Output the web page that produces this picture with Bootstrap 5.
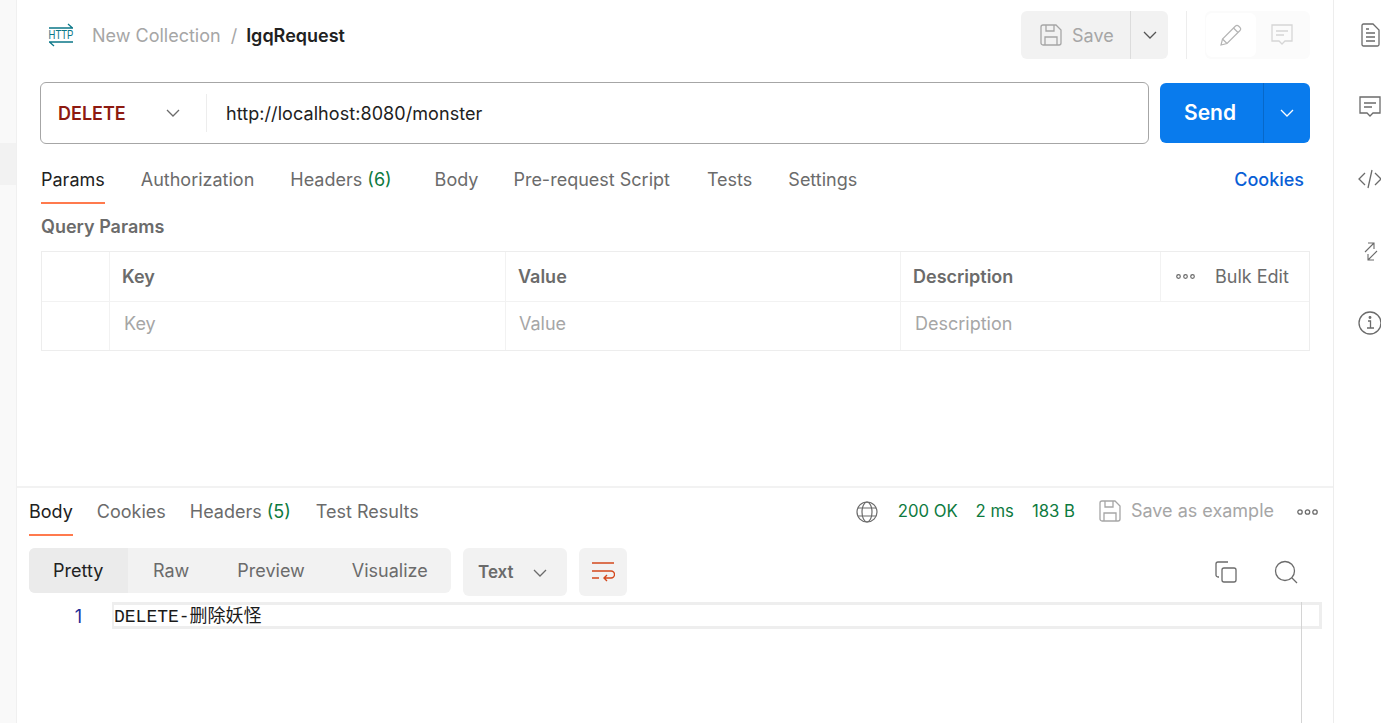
<!DOCTYPE html>
<html lang="en">
<head>
<meta charset="utf-8">
<title>IgqRequest</title>
<link href="https://cdn.jsdelivr.net/npm/bootstrap@5.3.0/dist/css/bootstrap.min.css" rel="stylesheet">
<style>
html,body{height:723px;overflow:hidden;background:#fff}
body{font-family:Inter,"Liberation Sans",sans-serif;font-size:18px;color:#212121}
svg{display:block;flex:none}
.pm-app{height:723px;width:1381px}
.pm-left{width:17px;flex:none;background:#f9f9f9;border-right:1px solid #f0f0f0;padding-top:143px}
.pm-left-sel{height:42px;background:#f2f2f2}
.pm-main{width:1316px;flex:none}
.pm-right{width:48px;flex:none;border-left:1px solid #ededed;overflow:hidden}
.pm-slots{width:72px;margin-top:-1px}
.pm-slot{height:72px}
.pm-req{padding:0 23px;height:488px;border-bottom:2px solid #f2f2f2}
.pm-head{height:82px;padding-bottom:12px}
.pm-http{width:26px;margin:0 18px 0 8px;flex:none}
.pm-http-t{font-family:"Liberation Sans",sans-serif;font-size:9.500px;line-height:12px;height:12px;text-align:center;color:#0b7788;transform:scaleY(1.25);white-space:nowrap}
.pm-crumb{color:#a6a6a6}
.pm-sep{color:#a6a6a6;margin:0 9px 0 10px}
.pm-name{color:#212121;font-weight:600}
.pm-save{width:147px;height:48px;background:#f2f2f2;border-radius:6px;color:#a6a6a6}
.pm-save-a{width:110px;border-right:1px solid #dcdcdc;padding-left:19px;gap:10px}
.pm-save-b{flex:1}
.pm-vr{width:1px;height:48px;background:#ededed;margin:0 18px}
.pm-tools{width:105px;height:48px;background:#fbfbfb;border-radius:6px}
.pm-tool-on{width:50px;height:44px;background:#fff;border-radius:6px;margin:2px 0 2px 1px}
.pm-tool-off{flex:1;padding-right:2px}
.pm-url{width:1109px;height:62px;border:1px solid #a6a6a6;border-radius:6px}
.pm-method{width:166px;padding:0 26px 0 17px;height:38px;border-right:1px solid #ededed;color:#8e1a10;font-weight:600}
.pm-addr{padding-left:19px;color:#212121;letter-spacing:.07px}
.pm-send{width:150px;height:60px;margin-left:11px;background:#097bed;border-radius:6px;color:#fff;font-size:21px;font-weight:600}
.pm-send-a{width:104px;border-right:1px solid #0768c9;height:100%;padding-right:3px}
.pm-send-b{flex:1}
.pm-tabs{height:71px;gap:36px;margin-left:1px}
.pm-tab{color:#6b6b6b;position:relative;line-height:22px}
.pm-tab.pm-on{color:#212121}
.pm-tab.pm-on::after{content:"";position:absolute;left:0;right:0;height:2px;background:#ff7a4d;bottom:-13px}
.pm-num{color:#0d7a40}
.pm-gap-h{margin-right:7px}
.pm-gap-b{margin-right:-1px}
.pm-gap-p{margin-right:1px}
.pm-cookies{color:#0a5fd6;font-weight:500;margin-left:auto;margin-right:6px}
.pm-qp{color:#6b6b6b;font-weight:600;margin:1px 0 13px 1px;line-height:22px}
.pm-table{width:1269px;margin-left:1px;border:1px solid #ededed;color:#6b6b6b}
.pm-row{height:49px}
.pm-row+.pm-row{height:49px;border-top:1px solid #f2f2f2}
.pm-row+.pm-row>div{padding-bottom:5px}
.pm-c0{width:68px;border-right:1px solid #f2f2f2}
.pm-c1{width:396px;border-right:1px solid #f2f2f2;padding-left:12px}
.pm-c2{width:395px;border-right:1px solid #f2f2f2;padding-left:12px}
.pm-c3{width:260px;border-right:1px solid #f2f2f2;padding-left:12px}
.pm-c4{flex:1;padding-left:15px;gap:20px}
.pm-th{font-weight:600}
.pm-ph{color:#a6a6a6;padding-left:2px}
.pm-ph2{color:#a6a6a6;margin-left:1px}
.pm-res{padding-left:12px;position:relative;height:235px}
.pm-rbar{height:48px;padding-right:15px}
.pm-rtabs{gap:24px}
.pm-tr{margin-left:1px}
.pm-status{color:#0d7a40;font-size:16.7px}
.pm-g18{margin-left:18px}
.pm-g20{margin-left:20px}
.pm-grey{color:#a6a6a6;margin-left:10px;margin-bottom:3px}
.pm-savei{margin-left:24px;margin-bottom:2px}
.pm-more{margin-left:23px}
.pm-ctrl{height:48px;margin-top:12px;padding-right:35px}
.pm-seg{width:422px;height:45px;background:#f2f2f2;border-radius:6px;color:#6b6b6b;align-self:flex-start}
.pm-seg-on{width:99px;height:100%;background:#ebebeb;border-radius:6px 0 0 6px;color:#212121;padding-left:24px}
.pm-seg-r{margin-left:25px}
.pm-seg-p{margin-left:48px}
.pm-seg-v{margin-left:47px}
.pm-txt{width:104px;height:48px;background:#f2f2f2;border-radius:6px;margin-left:12px;padding-left:15px;padding-top:2px;font-weight:600;color:#6b6b6b;font-size:17px;gap:19px}
.pm-wrap{width:48px;height:48px;background:#f2f2f2;border-radius:6px;margin-left:12px}
.pm-acts{gap:37px}
.pm-code{height:27px;margin-top:6px;font-family:"Liberation Mono","Noto Sans CJK SC",monospace;font-size:18px;line-height:21px}
.pm-ln{width:83px;text-align:right;padding-right:30px;padding-top:4px;color:#1c2f99;font-family:Inter,sans-serif}
.pm-line{width:1210px;height:27px;border:3px solid #eee;border-left-width:2px;color:#1a1a1a;line-height:25px}
.pm-sbar{position:absolute;left:1284px;top:114px;bottom:0;width:1px;background:#d4d4d4}
</style>
</head>
<body>
<div class="pm-app d-flex">
  <div class="pm-left"><div class="pm-left-sel"></div></div>
  <div class="pm-main d-flex flex-column">
    <div class="pm-req">
      <div class="pm-head d-flex align-items-center">
        <div class="pm-http d-flex flex-column">
          <svg width="26" height="6" viewBox="0 0 26 6" fill="none" stroke="#0b7788" stroke-width="1.300"><path d="M1 5H25M20 1l4.500 4"/></svg>
          <div class="pm-http-t">HTTP</div>
          <svg width="26" height="6" viewBox="0 0 26 6" fill="none" stroke="#0b7788" stroke-width="1.300"><path d="M1 1H25M6 5 1.500 1"/></svg>
        </div>
        <span class="pm-crumb">New Collection</span><span class="pm-sep">/</span><span class="pm-name">IgqRequest</span>
        <div class="ms-auto d-flex align-items-center">
          <div class="pm-save d-flex">
            <div class="pm-save-a d-flex align-items-center">
              <svg width="22" height="22" viewBox="0 0 22 22" fill="none" stroke="#a6a6a6" stroke-width="1.300"><path d="M1 3a2 2 0 0 1 2-2h13l5 5v13a2 2 0 0 1-2 2H3a2 2 0 0 1-2-2z"/><path d="M6 1v6h8V1M5 21v-8h12v8"/></svg>
              <span>Save</span>
            </div>
            <div class="pm-save-b d-flex align-items-center justify-content-center"><svg width="14" height="8" viewBox="0 0 14 8" fill="none" stroke="#555" stroke-width="1.300"><path d="M1 1l6 6 6-6"/></svg></div>
          </div>
          <div class="pm-vr"></div>
          <div class="pm-tools d-flex align-items-center">
            <div class="pm-tool-on d-flex align-items-center justify-content-center"><svg width="22" height="22" viewBox="0 0 22 22" fill="none" stroke="#b5b5b5" stroke-width="1.200"><path d="M1 21l1.500-6L15.500 2a2 2 0 0 1 3 0l1.500 1.500a2 2 0 0 1 0 3L7 19.500z"/><path d="M13.500 4l4.500 4.500M2.500 15l4.500 4.500"/></svg></div>
            <div class="pm-tool-off d-flex align-items-center justify-content-center"><svg width="22" height="22" viewBox="0 0 22 22" fill="none" stroke="#d6d6d6" stroke-width="1.300"><path d="M1 1h20v16h-7l-3 3-3-3H1z"/><path d="M5 7h12M5 11h8"/></svg></div>
          </div>
        </div>
      </div>
      <div class="d-flex align-items-center">
        <div class="pm-url d-flex align-items-center">
          <div class="pm-method d-flex align-items-center justify-content-between"><span>DELETE</span><svg width="14" height="8" viewBox="0 0 14 8" fill="none" stroke="#6b6b6b" stroke-width="1.300"><path d="M1 1l6 6 6-6"/></svg></div>
          <div class="pm-addr">http://localhost:8080/monster</div>
        </div>
        <div class="pm-send d-flex align-items-center">
          <div class="pm-send-a d-flex align-items-center justify-content-center"><span>Send</span></div>
          <div class="pm-send-b d-flex align-items-center justify-content-center"><svg width="14" height="8" viewBox="0 0 14 8" fill="none" stroke="#fff" stroke-width="1.300"><path d="M1 1l6 6 6-6"/></svg></div>
        </div>
      </div>
      <div class="pm-tabs d-flex align-items-center">
        <span class="pm-tab pm-on">Params</span>
        <span class="pm-tab">Authorization</span>
        <span class="pm-tab pm-gap-h">Headers <span class="pm-num">(6)</span></span>
        <span class="pm-tab pm-gap-b">Body</span>
        <span class="pm-tab pm-gap-p">Pre-request Script</span>
        <span class="pm-tab">Tests</span>
        <span class="pm-tab">Settings</span>
        <span class="pm-cookies">Cookies</span>
      </div>
      <div class="pm-qp">Query Params</div>
      <div class="pm-table">
        <div class="pm-row d-flex">
          <div class="pm-c0"></div>
          <div class="pm-c1 pm-th d-flex align-items-center">Key</div>
          <div class="pm-c2 pm-th d-flex align-items-center">Value</div>
          <div class="pm-c3 pm-th d-flex align-items-center">Description</div>
          <div class="pm-c4 d-flex align-items-center">
            <svg width="19" height="5" viewBox="0 0 19 5" fill="none" stroke="#6b6b6b" stroke-width="1.200"><circle cx="2.500" cy="2.500" r="1.800"/><circle cx="9.500" cy="2.500" r="1.800"/><circle cx="16.500" cy="2.500" r="1.800"/></svg>
            <span>Bulk Edit</span>
          </div>
        </div>
        <div class="pm-row d-flex">
          <div class="pm-c0"></div>
          <div class="pm-c1 d-flex align-items-center"><span class="pm-ph">Key</span></div>
          <div class="pm-c2 d-flex align-items-center"><span class="pm-ph2">Value</span></div>
          <div class="pm-c3 border-0 d-flex align-items-center"><span class="pm-ph">Description</span></div>
          <div class="pm-c4"></div>
        </div>
      </div>
    </div>
    <div class="pm-res">
      <div class="pm-rbar d-flex align-items-center">
        <div class="pm-rtabs d-flex align-items-center">
          <span class="pm-tab pm-on">Body</span>
          <span class="pm-tab">Cookies</span>
          <span class="pm-tab">Headers <span class="pm-num">(5)</span></span>
          <span class="pm-tab pm-tr">Test Results</span>
        </div>
        <div class="ms-auto d-flex align-items-center">
          <svg width="22" height="22" viewBox="0 0 22 22" fill="none" stroke="#6b6b6b" stroke-width="1.200"><circle cx="11" cy="11" r="10"/><ellipse cx="11" cy="11" rx="5" ry="10"/><path d="M2 7h18M2 15h18"/></svg>
          <span class="pm-status pm-g20">200 OK</span>
          <span class="pm-status pm-g18">2 ms</span>
          <span class="pm-status pm-g18">183 B</span>
          <svg class="pm-savei" width="22" height="22" viewBox="0 0 22 22" fill="none" stroke="#a6a6a6" stroke-width="1.300"><path d="M1 3a2 2 0 0 1 2-2h13l5 5v13a2 2 0 0 1-2 2H3a2 2 0 0 1-2-2z"/><path d="M6 1v6h8V1M5 21v-8h12v8"/></svg>
          <span class="pm-grey">Save as example</span>
          <svg class="pm-more" width="21" height="6" viewBox="0 0 21 6" fill="none" stroke="#6b6b6b" stroke-width="1.300"><circle cx="3" cy="3" r="2.200"/><circle cx="10.500" cy="3" r="2.200"/><circle cx="18" cy="3" r="2.200"/></svg>
        </div>
      </div>
      <div class="pm-ctrl d-flex align-items-center">
        <div class="pm-seg d-flex align-items-center">
          <div class="pm-seg-on d-flex align-items-center">Pretty</div>
          <span class="pm-seg-r">Raw</span>
          <span class="pm-seg-p">Preview</span>
          <span class="pm-seg-v">Visualize</span>
        </div>
        <div class="pm-txt d-flex align-items-center"><span>Text</span><svg width="14" height="8" viewBox="0 0 14 8" fill="none" stroke="#6b6b6b" stroke-width="1.300"><path d="M1 1l6 6 6-6"/></svg></div>
        <div class="pm-wrap d-flex align-items-center justify-content-center"><svg width="24" height="22" viewBox="0 0 24 22" fill="none" stroke="#d4481c" stroke-width="1.400"><path d="M1 2h22M1 10h19a3 3 0 0 1 0 7h-7M16 14l-3 3 3 3M1 17h7"/></svg></div>
        <div class="ms-auto d-flex align-items-center pm-acts">
          <svg width="22" height="22" viewBox="0 0 22 22" fill="none" stroke="#6b6b6b" stroke-width="1.300"><rect x="7" y="7" width="14" height="14" rx="2"/><path d="M4 16H3a2 2 0 0 1-2-2V3a2 2 0 0 1 2-2h10"/></svg>
          <svg width="24" height="24" viewBox="0 0 24 24" fill="none" stroke="#6b6b6b" stroke-width="1.300"><circle cx="11" cy="11" r="9.500"/><path d="M18 18l5 5"/></svg>
        </div>
      </div>
      <div class="pm-code d-flex">
        <div class="pm-ln">1</div>
        <div class="pm-line">DELETE-删除妖怪</div>
      </div>
      <div class="pm-sbar"></div>
    </div>
  </div>
  <div class="pm-right">
    <div class="pm-slots d-flex flex-column">
      <div class="pm-slot d-flex align-items-center justify-content-center"><svg width="19" height="24" viewBox="0 0 19 24" fill="none" stroke="#6b6b6b" stroke-width="1.300"><path d="M1 2.500A1.500 1.500 0 0 1 2.500 1H12l6 6v14.500a1.500 1.500 0 0 1-1.500 1.500h-14A1.500 1.500 0 0 1 1 21.500z"/><path d="M5 6h3M5 10h9M5 14h9M5 18h9"/></svg></div>
      <div class="pm-slot d-flex align-items-center justify-content-center"><svg width="22" height="22" viewBox="0 0 22 22" fill="none" stroke="#6b6b6b" stroke-width="1.300"><path d="M1 1h20v16h-7l-3 3-3-3H1z"/><path d="M5 7h12M5 11h8"/></svg></div>
      <div class="pm-slot d-flex align-items-center justify-content-center"><svg width="24" height="20" viewBox="0 0 24 20" fill="none" stroke="#6b6b6b" stroke-width="1.300"><path d="M7 4 1 10l6 6M17 4l6 6-6 6M14 1 10 19"/></svg></div>
      <div class="pm-slot d-flex align-items-center justify-content-center"><svg width="15" height="19" viewBox="0 0 15 19" fill="none" stroke="#6b6b6b" stroke-width="1.100"><path d="M5 1h6v6M11 1 2 10"/><path d="M11 18H5v-6M5 18l9-9"/></svg></div>
      <div class="pm-slot d-flex align-items-center justify-content-center"><svg width="24" height="24" viewBox="0 0 24 24" fill="none" stroke="#6b6b6b" stroke-width="1.300"><circle cx="12" cy="12" r="11"/><path d="M10 10h2.500v7M9 17h7"/><circle cx="12" cy="6.500" r=".8"/></svg></div>
    </div>
  </div>
</div>
</body>
</html>
